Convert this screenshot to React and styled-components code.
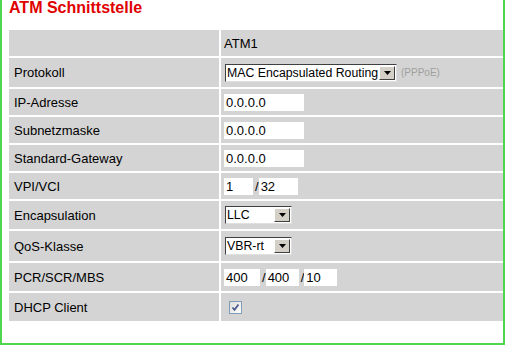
import React from "react";
import styled, { createGlobalStyle } from "styled-components";

const GlobalStyle = createGlobalStyle`
  html, body {
    margin: 0;
    padding: 0;
    background: #ffffff;
  }
  body {
    font-family: "Liberation Sans", Arial, sans-serif;
  }
`;

const Frame = styled.div`
  box-sizing: border-box;
  width: 505px;
  height: 345px;
  border-left: 2px solid #4fd64f;
  border-right: 2px solid #4fd64f;
  border-bottom: 2px solid #4fd64f;
  padding-left: 7px;
`;

const Title = styled.h1`
  margin: 0;
  height: 30px;
  font-size: 16px;
  line-height: 16px;
  font-weight: bold;
  color: #e00000;
`;

const Table = styled.div`
  display: grid;
  grid-template-columns: 210px 1fr;
  column-gap: 2px;
  row-gap: 2px;
  background: #ffffff;
`;

const Cell = styled.div`
  box-sizing: border-box;
  height: ${(p) => p.$h}px;
  background: #d4d4d4;
  display: flex;
  align-items: center;
  padding-left: ${(p) => (p.$label ? 5 : 3)}px;
  font-size: 13px;
  color: #000;
  white-space: nowrap;
`;

const TextInput = styled.div`
  box-sizing: border-box;
  width: ${(p) => p.$w}px;
  height: 17px;
  background: #fff;
  padding-left: 2px;
  font-size: 13px;
  line-height: 17px;
`;

const Slash = styled.span`
  font-size: 13px;
  color: #000;
  margin: 0 0 0 2px;
`;

const SelectBox = styled.div`
  box-sizing: border-box;
  width: ${(p) => p.$w}px;
  height: 18px;
  background: #fff;
  border-top: 1px solid #404040;
  border-left: 1px solid #404040;
  border-right: 1px solid #e0e0e0;
  border-bottom: 1px solid #e0e0e0;
  display: flex;
  align-items: center;
  padding-left: 1px;
  padding-right: 1px;
  margin-left: 1px;
  white-space: nowrap;
`;

const SelectText = styled.span`
  flex: 1;
  min-width: 0;
  overflow: hidden;
  font-size: 12.3px;
`;

const ArrowButton = styled.div`
  box-sizing: border-box;
  flex: none;
  width: 16px;
  height: 14px;
  background: #d4d0c8;
  border-top: 1px solid #fff;
  border-left: 1px solid #fff;
  border-right: 1px solid #404040;
  border-bottom: 1px solid #404040;
  display: flex;
  align-items: center;
  justify-content: center;
`;

const Hint = styled.span`
  font-size: 10px;
  color: #a0a0a0;
  margin-left: 4px;
`;

const Check = styled.div`
  box-sizing: border-box;
  width: 13px;
  height: 13px;
  margin-left: 5px;
  border: 1px solid #7f9db9;
  background: linear-gradient(135deg, #dcdcd8, #ffffff);
  display: flex;
  align-items: center;
  justify-content: center;
`;

const Select = ({ value, w }) => (
  <SelectBox $w={w}>
    <SelectText>{value}</SelectText>
    <ArrowButton>
      <svg width="7" height="4" viewBox="0 0 7 4">
        <polygon points="0,0 7,0 3.5,4" fill="#000" />
      </svg>
    </ArrowButton>
  </SelectBox>
);

const rows = [
  { label: "Protokoll", h: 29, content: (
    <>
      <Select value="MAC Encapsulated Routing" w={172} />
      <Hint>(PPPoE)</Hint>
    </>
  ) },
  { label: "IP-Adresse", h: 26, content: <TextInput $w={80}>0.0.0.0</TextInput> },
  { label: "Subnetzmaske", h: 26, content: <TextInput $w={80}>0.0.0.0</TextInput> },
  { label: "Standard-Gateway", h: 26, content: <TextInput $w={80}>0.0.0.0</TextInput> },
  { label: "VPI/VCI", h: 26, content: (
    <>
      <TextInput $w={29}>1</TextInput>
      <Slash>/</Slash>
      <TextInput $w={39}>32</TextInput>
    </>
  ) },
  { label: "Encapsulation", h: 28, content: <Select value="LLC" w={67} /> },
  { label: "QoS-Klasse", h: 30, content: <Select value="VBR-rt" w={67} /> },
  { label: "PCR/SCR/MBS", h: 28, content: (
    <>
      <TextInput $w={36}>400</TextInput>
      <Slash>/</Slash>
      <TextInput $w={33}>400</TextInput>
      <Slash>/</Slash>
      <TextInput $w={33}>10</TextInput>
    </>
  ) },
  { label: "DHCP Client", h: 28, content: (
    <Check>
      <svg width="9" height="9" viewBox="0 0 9 9">
        <path d="M1.5 4.5 L3.5 6.8 L7.5 1.5" stroke="#4a5a8c" strokeWidth="1.8" fill="none" />
      </svg>
    </Check>
  ) },
];

export default function App() {
  return (
    <>
      <GlobalStyle />
      <Frame>
        <Title>ATM Schnittstelle</Title>
        <Table>
          <Cell $h={26} $label />
          <Cell $h={26}>ATM1</Cell>
          {rows.map((r) => (
            <React.Fragment key={r.label}>
              <Cell $h={r.h} $label>{r.label}</Cell>
              <Cell $h={r.h}>{r.content}</Cell>
            </React.Fragment>
          ))}
        </Table>
      </Frame>
    </>
  );
}
